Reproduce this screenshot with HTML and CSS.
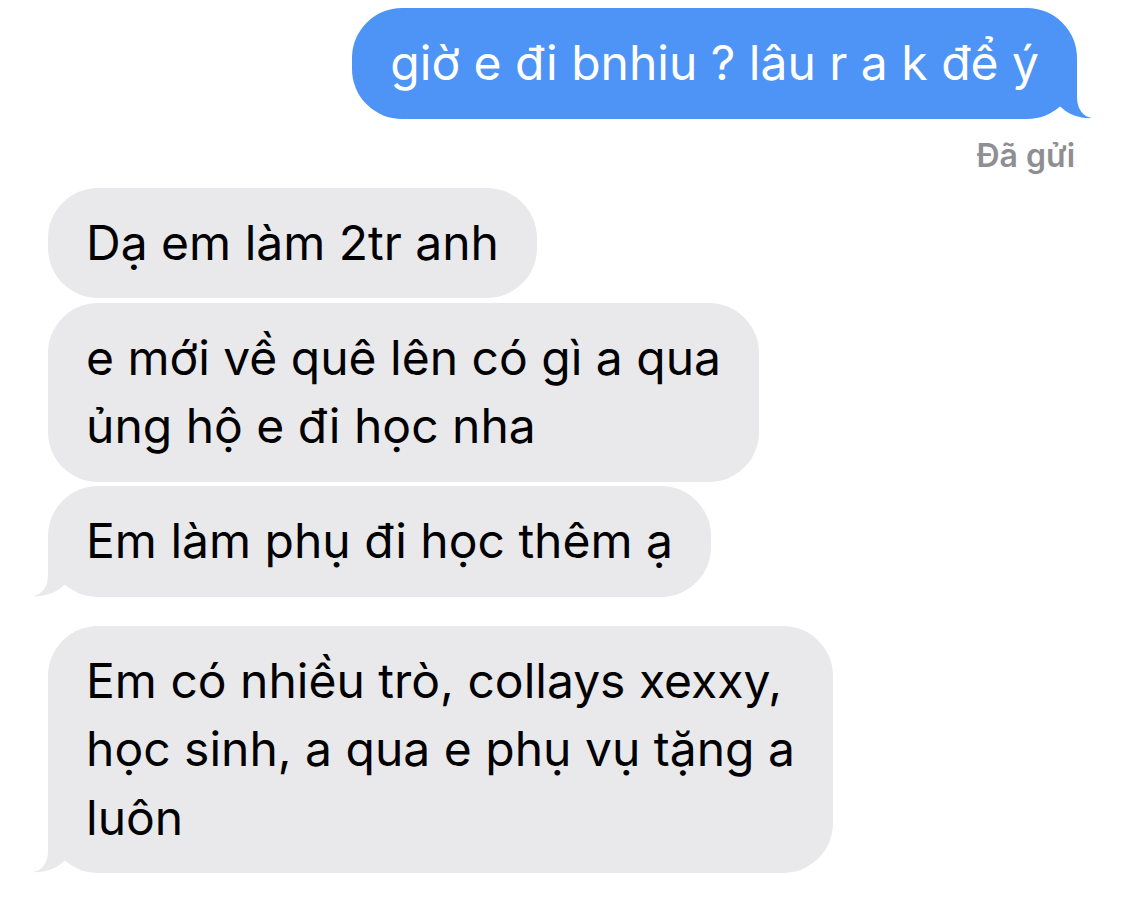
FILE: index.html
```html
<!DOCTYPE html>
<html lang="vi">
<head>
<meta charset="utf-8">
<title>Tin nhắn</title>
<link rel="stylesheet" href="styles.css">
</head>
<body>
<div class="thread">
  <div class="bubble sent tail">
    giờ e đi bnhiu ? lâu r a k để ý
    <svg class="tail-svg" viewBox="-15 -50 45 50" aria-hidden="true"><path d="M0,-50 L0,-22 C0,-9 -7,-2 -15,-1 C-5,0 8,-4 15,-11 L30,-22 L30,-50 Z"/></svg>
  </div>
  <div class="status">Đã gửi</div>

  <div class="group">
    <div class="bubble recv">Dạ em làm 2tr anh</div>
    <div class="bubble recv">e mới về quê lên có gì a qua<br>ủng hộ e đi học nha</div>
    <div class="bubble recv tail">Em làm phụ đi học thêm ạ
      <svg class="tail-svg" viewBox="-15 -50 45 50" aria-hidden="true"><path d="M0,-50 L0,-22 C0,-9 -7,-2 -15,-1 C-5,0 8,-4 15,-11 L30,-22 L30,-50 Z"/></svg>
    </div>
  </div>

  <div class="group">
    <div class="bubble recv tail">Em có nhiều trò, collays xexxy,<br>học sinh, a qua e phụ vụ tặng a<br>luôn
      <svg class="tail-svg" viewBox="-15 -50 45 50" aria-hidden="true"><path d="M0,-50 L0,-22 C0,-9 -7,-2 -15,-1 C-5,0 8,-4 15,-11 L30,-22 L30,-50 Z"/></svg>
    </div>
  </div>
</div>
</body>
</html>
```

FILE: styles.css
```css
html, body {
  margin: 0;
  padding: 0;
  background: #ffffff;
}

body {
  font-family: "Inter", "Liberation Sans", sans-serif;
  -webkit-font-smoothing: antialiased;
}

.thread {
  display: flex;
  flex-direction: column;
  padding: 8px 48px 0 48px;
}

.group {
  display: flex;
  flex-direction: column;
  align-items: flex-start;
  gap: 4.5px;
  margin-bottom: 29px;
}

.bubble {
  position: relative;
  width: fit-content;
  box-sizing: border-box;
  padding: 21px 38px 21px 38px;
  border-radius: 50px;
  font-size: 48px;
  line-height: 68.5px;
  letter-spacing: 0;
}

.sent {
  align-self: flex-end;
  background: #4d94f6;
  color: #ffffff;
}

.recv {
  background: #e9e9eb;
  color: #000000;
}

.tail-svg {
  position: absolute;
  bottom: 0;
  width: 45px;
  height: 50px;
}

.recv .tail-svg {
  left: -15px;
  fill: #e9e9eb;
}

.sent .tail-svg {
  right: -15px;
  fill: #4d94f6;
  transform: scaleX(-1);
}

.status {
  align-self: flex-end;
  margin: 17px 2px 12px 0;
  font-size: 32px;
  line-height: 40px;
  font-weight: 600;
  color: #8e8e93;
}
```
